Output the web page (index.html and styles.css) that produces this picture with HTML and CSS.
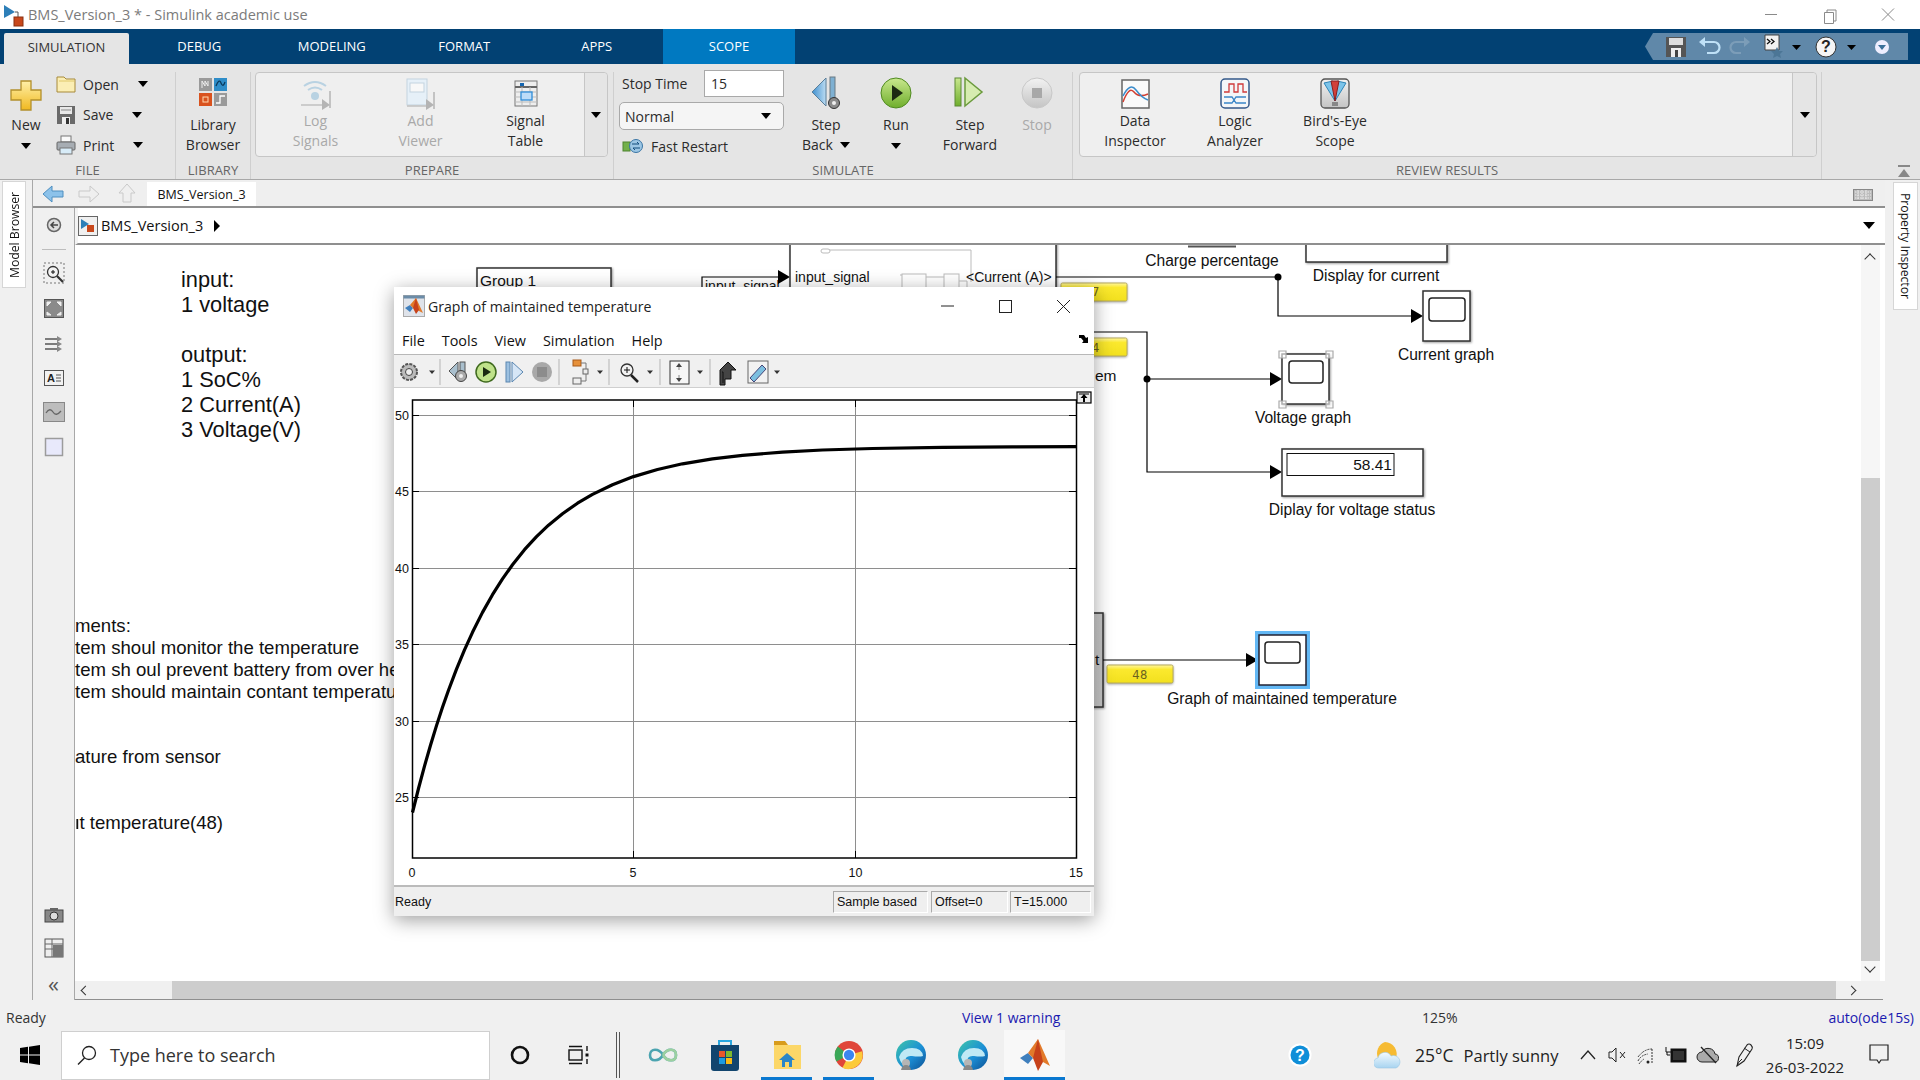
FILE: index.html
```html
<!DOCTYPE html>
<html lang="en">
<head>
<meta charset="utf-8">
<title>BMS_Version_3 - Simulink</title>
<link rel="stylesheet" href="styles.css">
</head>
<body>
<svg class="defs" width="0" height="0" aria-hidden="true"><defs>
  <linearGradient id="gPlus" x1="0" y1="0" x2="0" y2="1"><stop offset="0" stop-color="#fff0a8"/><stop offset="1" stop-color="#f0b820"/></linearGradient>
  <linearGradient id="gGreen" x1="0" y1="0" x2="0" y2="1"><stop offset="0" stop-color="#c9e88e"/><stop offset="1" stop-color="#6fae2c"/></linearGradient>
  <linearGradient id="gBlue" x1="0" y1="0" x2="1" y2="0"><stop offset="0" stop-color="#3e8fcf"/><stop offset="1" stop-color="#bcdcf2"/></linearGradient>
  <linearGradient id="gGrey" x1="0" y1="0" x2="0" y2="1"><stop offset="0" stop-color="#f2f2f2"/><stop offset="1" stop-color="#c4c4c4"/></linearGradient>
  <linearGradient id="gBlock" x1="0" y1="0" x2="1" y2="0"><stop offset="0" stop-color="#f0f0f0"/><stop offset="1" stop-color="#c4c4c4"/></linearGradient>
  <linearGradient id="gDisp" x1="0" y1="0" x2="0" y2="1"><stop offset="0" stop-color="#fff6a0"/><stop offset=".25" stop-color="#fbe92e"/><stop offset="1" stop-color="#f2e01e"/></linearGradient>
  <linearGradient id="gEdge" x1="0" y1="0" x2="1" y2="1"><stop offset="0" stop-color="#3fc6a8"/><stop offset=".55" stop-color="#1b8fd6"/><stop offset="1" stop-color="#0d4f92"/></linearGradient>
  <linearGradient id="gCloud" x1="0" y1="0" x2="0" y2="1"><stop offset="0" stop-color="#f4fbff"/><stop offset="1" stop-color="#a8d4f0"/></linearGradient>
</defs></svg>

<div class="app">
  <header class="titlebar">
    <svg class="title-icon" width="22" height="24" viewBox="0 0 22 24"><path d="M2 2l11 7-11 6z" fill="#2d7fb8"/><path d="M13 9h3v5" fill="none" stroke="#555" stroke-width="1"/><rect x="12" y="14" width="9" height="9" fill="#c8481c" stroke="#8a3010"/></svg>
    <span class="title-text">BMS_Version_3 * - Simulink academic use</span>
    <div class="win-controls">
      <svg class="win-ctl" width="58" height="29" viewBox="0 0 58 29"><path d="M23 14.5h12" stroke="#8a8a8a"/></svg>
      <svg class="win-ctl" width="58" height="29" viewBox="0 0 58 29"><path d="M24.5 12.5h9v11h-9zM27 12.5v-2.5h9v11h-2.500" fill="none" stroke="#8a8a8a"/></svg>
      <svg class="win-ctl" width="59" height="29" viewBox="0 0 59 29"><path d="M24 8.500l12 12M36 8.500l-12 12" stroke="#8a8a8a"/></svg>
    </div>
  </header>

  <nav class="tabs">
    <div class="tab tab-active">SIMULATION</div>
    <div class="tab">DEBUG</div>
    <div class="tab">MODELING</div>
    <div class="tab">FORMAT</div>
    <div class="tab">APPS</div>
    <div class="tab tab-scope">SCOPE</div>
    <div class="quick">
      <svg width="263" height="27" viewBox="0 0 263 27">
        <rect x="21" y="4" width="20" height="20" fill="#555"/><rect x="24" y="5" width="14" height="7" fill="#ddd"/><rect x="26" y="15" width="10" height="9" fill="#eee"/><rect x="30" y="17" width="3" height="7" fill="#444"/>
        <path d="M59 9h10a5 5 0 0 1 0 11h-7" fill="none" stroke="#bfe1f7" stroke-width="2.200"/><path d="M54 9l6-5v10z" fill="#bfe1f7"/>
        <path d="M101 9H91a5 5 0 0 0 0 11h5" fill="none" stroke="#7c9db8" stroke-width="2.200"/><path d="M105 9l-6-5v10z" fill="#7c9db8"/>
        <path d="M120 2h14v15h-14z" fill="#f2f2f2" stroke="#444"/><path d="M122 6l3 2.500-3 2.500M126 6l3 2.500-3 2.500" fill="none" stroke="#111" stroke-width="1.300"/><path d="M132 14l2 4h4l-3 3 1 4-4-2-4 2 1-4-3-3h4z" fill="#4c7696"/>
        <path d="M147 12h9l-4.500 5z" fill="#000"/>
        <circle cx="181" cy="14" r="10" fill="#f5f5f5" stroke="#333"/><text class="q-help" x="181" y="19">?</text>
        <path d="M202 12h9l-4.500 5z" fill="#000"/>
        <circle cx="237" cy="14" r="7" fill="#eef"/><path d="M233 12h8l-4 5z" fill="#3a6f9a"/>
      </svg>
    </div>
  </nav>

  <section class="ribbon">
    <div class="group g-file">
      <div class="group-body">
        <div class="btn btn-new">
          <svg width="36" height="36" viewBox="0 0 36 36"><path d="M13 4h10v9h10v10H23v10H13V23H3V13h10z" fill="url(#gPlus)" stroke="#b3902c" stroke-width="1.300"/></svg>
          <span class="btn-text">New</span>
          <span class="caret"></span>
        </div>
        <div class="file-list">
          <div class="file-row">
            <svg width="20" height="20" viewBox="0 0 20 20"><path d="M1 3h7l2 2h9v13H1z" fill="#fbeeb4" stroke="#a78a3a"/><path d="M3 7h15" stroke="#e0c868"/></svg>
            <span class="file-name">Open</span><span class="caret caret-open"></span>
          </div>
          <div class="file-row">
            <svg width="20" height="20" viewBox="0 0 20 20"><rect x="1" y="1" width="18" height="18" fill="#6a6a6a"/><rect x="4" y="2" width="12" height="7" fill="#e8e8e8"/><path d="M5 5h10" stroke="#888"/><rect x="6" y="12" width="8" height="7" fill="#eee"/><rect x="10" y="13" width="3" height="6" fill="#333"/></svg>
            <span class="file-name">Save</span><span class="caret caret-save"></span>
          </div>
          <div class="file-row">
            <svg width="20" height="20" viewBox="0 0 20 20"><rect x="5" y="1" width="10" height="6" fill="#fafafa" stroke="#777"/><rect x="1" y="7" width="18" height="8" rx="1" fill="#a7adb3" stroke="#666"/><rect x="4" y="13" width="12" height="6" fill="#d8ecf8" stroke="#777"/></svg>
            <span class="file-name">Print</span><span class="caret caret-print"></span>
          </div>
        </div>
      </div>
      <div class="group-label">FILE</div>
    </div>

    <div class="group g-lib">
      <div class="group-body">
        <div class="btn btn-lib">
          <svg width="30" height="30" viewBox="0 0 30 30"><rect x="1" y="1" width="13" height="13" fill="#9a9a9a"/><path d="M4 11V4l3 5V4l3 5V4" fill="none" stroke="#eee"/><rect x="16" y="1" width="13" height="13" fill="#2f8dc8"/><path d="M18 9q3-8 5-3t4-1" fill="none" stroke="#0b3a5c" stroke-width="1.300"/><rect x="1" y="16" width="13" height="13" fill="#d9521e"/><rect x="5" y="20" width="5" height="5" fill="none" stroke="#ffd9b0"/><rect x="16" y="16" width="13" height="13" fill="#9a9a9a"/><path d="M18 26h4v-7h5" fill="none" stroke="#fff" stroke-width="1.300"/></svg>
          <span class="btn-text">Library<br>Browser</span>
        </div>
      </div>
      <div class="group-label">LIBRARY</div>
    </div>

    <div class="group g-prep">
      <div class="group-body">
        <div class="panel panel-prep">
          <div class="panel-main panel-main-prep">
            <div class="pbtn pbtn-prep off">
              <svg width="32" height="32" viewBox="0 0 32 32"><path d="M4 8q11-8 22 0M8 12q7-5 14 0" fill="none" stroke="#b9d2e2" stroke-width="2"/><circle cx="15" cy="18" r="4" fill="#b9d2e2"/><path d="M1 27h22" stroke="#c0c0c0" stroke-width="1.500"/><path d="M22 21l8 6-8 5z" fill="#b4b4b4"/><path d="M30 13v17" stroke="#b4b4b4" stroke-width="1.500"/></svg>
              <span class="btn-text">Log<br>Signals</span>
            </div>
            <div class="pbtn pbtn-prep off">
              <svg width="32" height="32" viewBox="0 0 32 32"><rect x="2" y="1" width="20" height="26" fill="#e6f0f8" stroke="#c3d3df"/><rect x="5" y="5" width="14" height="9" fill="#f8f8f8" stroke="#c3d3df"/><path d="M2 28h20" stroke="#c0c0c0" stroke-width="1.500"/><path d="M21 21l8 6-8 5z" fill="#b4b4b4"/><path d="M29 14v17" stroke="#b4b4b4" stroke-width="1.500"/></svg>
              <span class="btn-text">Add<br>Viewer</span>
            </div>
            <div class="pbtn pbtn-prep">
              <svg width="32" height="32" viewBox="0 0 32 32"><rect x="5" y="3" width="22" height="25" fill="#eee" stroke="#777"/><path d="M5 9h22" stroke="#666" stroke-width="2"/><path d="M5 14h22M5 19h22M5 24h22M12 9v19M20 9v19" stroke="#bbb"/><rect x="10" y="5" width="4" height="3" fill="#1565b0"/><rect x="11" y="14" width="11" height="8" fill="#bcdcf8" stroke="#2f8dd8" stroke-width="1.300"/></svg>
              <span class="btn-text">Signal<br>Table</span>
            </div>
          </div>
          <div class="panel-more"><span class="caret"></span></div>
        </div>
      </div>
      <div class="group-label">PREPARE</div>
    </div>

    <div class="group g-sim">
      <div class="group-body">
        <div class="stop-col">
          <div class="stop-row"><span class="file-name">Stop Time</span><span class="stop-input">15</span></div>
          <div class="mode-select"><span>Normal</span><span class="caret"></span></div>
          <div class="fast-row">
            <svg width="22" height="18" viewBox="0 0 22 18"><rect x="1" y="5" width="7" height="9" fill="#72b04a" stroke="#4f8430"/><circle cx="14" cy="9" r="6.500" fill="#9cc6e4" stroke="#3a75a4"/><path d="M10 7h7l-2-2M18 11h-7l2 2" fill="none" stroke="#134d7d"/></svg>
            <span class="fast-name">Fast Restart</span>
          </div>
        </div>
        <div class="btn btn-back">
          <svg width="36" height="36" viewBox="0 0 36 36"><path d="M18 3L4 17l14 14z" fill="url(#gBlue)" stroke="#5a7f9a"/><rect x="22" y="2" width="5" height="26" fill="#7eb0d2" stroke="#6a7a84"/><circle cx="26" cy="28" r="5.500" fill="#8a8a8a" stroke="#333"/><circle cx="26" cy="28" r="2" fill="#eee"/></svg>
          <span class="btn-text">Step<br>Back<span class="caret caret-inline"></span></span>
        </div>
        <div class="btn btn-run">
          <svg width="36" height="36" viewBox="0 0 36 36"><circle cx="18" cy="18" r="15" fill="url(#gGreen)" stroke="#4f8a20"/><path d="M14 10l11 8-11 8z" fill="#1c2a12"/></svg>
          <span class="btn-text">Run</span>
          <span class="caret"></span>
        </div>
        <div class="btn btn-fwd">
          <svg width="36" height="36" viewBox="0 0 36 36"><rect x="3" y="3" width="6" height="28" fill="url(#gGreen)" stroke="#5c8a34"/><path d="M13 3l17 14-17 14z" fill="#d6ecb0" stroke="#6a9a3c" stroke-width="1.500"/></svg>
          <span class="btn-text">Step<br>Forward</span>
        </div>
        <div class="btn btn-stop off">
          <svg width="36" height="36" viewBox="0 0 36 36"><circle cx="18" cy="18" r="15" fill="url(#gGrey)" stroke="#c8c8c8"/><rect x="13" y="13" width="10" height="10" fill="#a8a8a8"/></svg>
          <span class="btn-text">Stop</span>
        </div>
      </div>
      <div class="group-label">SIMULATE</div>
    </div>

    <div class="group g-rev">
      <div class="group-body">
        <div class="panel panel-rev">
          <div class="panel-main panel-main-rev">
            <div class="pbtn pbtn-rev">
              <svg width="32" height="32" viewBox="0 0 32 32"><rect x="3" y="2" width="27" height="28" fill="#fafafa" stroke="#666" stroke-width="1.500"/><path d="M4 24q6-16 11-10t14 2" fill="none" stroke="#d23f31" stroke-width="1.500"/><path d="M4 18q7-14 13-6t12 10" fill="none" stroke="#3a8ccb" stroke-width="1.500"/></svg>
              <span class="btn-text">Data<br>Inspector</span>
            </div>
            <div class="pbtn pbtn-rev">
              <svg width="32" height="32" viewBox="0 0 32 32"><rect x="2" y="1" width="28" height="29" rx="4" fill="#f4f6f8" stroke="#34598a" stroke-width="1.500"/><path d="M5 14h5V6h5v8h4V6h5v8h4" fill="none" stroke="#cf3a3a" stroke-width="1.300"/><path d="M5 19h8l4 6h10M5 25h8l4-6h10" fill="none" stroke="#3a86c8" stroke-width="1.300"/></svg>
              <span class="btn-text">Logic<br>Analyzer</span>
            </div>
            <div class="pbtn pbtn-rev">
              <svg width="32" height="32" viewBox="0 0 32 32"><rect x="2" y="1" width="28" height="29" rx="4" fill="url(#gGrey)" stroke="#555" stroke-width="1.300"/><path d="M5 5l9-2 2 20zM27 5l-9-2-2 20z" fill="#7cc4ea" stroke="#2f86b8"/><path d="M12 3h8l-4 20z" fill="#d2403a" stroke="#8a2020"/><rect x="13" y="24" width="6" height="4" fill="#888"/></svg>
              <span class="btn-text">Bird's-Eye<br>Scope</span>
            </div>
          </div>
          <div class="panel-more panel-more-rev"><span class="caret"></span></div>
        </div>
      </div>
      <div class="group-label">REVIEW RESULTS</div>
    </div>
    <div class="ribbon-end">
      <svg width="16" height="14" viewBox="0 0 16 14"><path d="M2 1h12" stroke="#888" stroke-width="2"/><path d="M8 4l6 8H2z" fill="#888"/></svg>
    </div>
  </section>

  <div class="workspace">
    <aside class="rail rail-left"><div class="vtab vtab-left">Model Browser</div></aside>
    <main class="center">
      <div class="navbar">
        <svg class="nav-ico" width="22" height="18" viewBox="0 0 22 18"><path d="M10 1L1 9l9 8v-5h11V6H10z" fill="#8cc2ea" stroke="#4e8fc0"/></svg>
        <svg class="nav-ico nav-fwd" width="22" height="18" viewBox="0 0 22 18"><path d="M12 1l9 8-9 8v-5H1V6h11z" fill="#efefef" stroke="#c9c9c9"/></svg>
        <svg class="nav-ico nav-up" width="18" height="20" viewBox="0 0 18 20"><path d="M9 1l8 9h-4v9H5v-9H1z" fill="#efefef" stroke="#c9c9c9"/></svg>
        <div class="doc-tab">BMS_Version_3</div>
        <svg class="keyboard" width="20" height="12" viewBox="0 0 20 12"><rect x=".5" y=".5" width="19" height="11" fill="#bbb" stroke="#888"/><path d="M2 3h16M2 6h16M2 9h16M5 1v10M9 1v10M13 1v10" stroke="#eee" stroke-dasharray="1.500 1"/></svg>
      </div>
      <div class="editor-row">
        <div class="side-tools">
          <svg class="st st-first" width="20" height="20" viewBox="0 0 20 20"><circle cx="10" cy="10" r="6.500" fill="#ddd" stroke="#666" stroke-width="1.500"/><path d="M14 10H7m3-3l-3 3 3 3" fill="none" stroke="#444" stroke-width="1.500"/></svg>
          <div class="st-sep"></div>
          <svg class="st" width="22" height="22" viewBox="0 0 22 22"><rect x="1" y="1" width="20" height="20" fill="none" stroke="#777" stroke-dasharray="2 2"/><circle cx="10" cy="10" r="5.500" fill="#f4f4f4" stroke="#333" stroke-width="1.300"/><path d="M8 10h4M10 8v4" stroke="#111"/><path d="M14 14l6 6" stroke="#333" stroke-width="2.200"/></svg>
          <svg class="st" width="20" height="20" viewBox="0 0 20 20"><rect x=".5" y=".5" width="19" height="18" fill="#8a8a8a" stroke="#555"/><path d="M3 7V3h4L3 7M17 7V3h-4l4 4M3 13v3h4l-4-3M17 13v3h-4l4-3" fill="#eee" stroke="#eee"/></svg>
          <svg class="st" width="20" height="20" viewBox="0 0 20 20"><path d="M1 5h15M1 10h15M1 15h15" stroke="#555" stroke-width="1.300"/><path d="M13 2l5 3-5 3zM13 7l5 3-5 3zM13 12l5 3-5 3z" fill="#888"/></svg>
          <svg class="st" width="20" height="18" viewBox="0 0 20 18"><rect x=".5" y="1.500" width="19" height="15" fill="#f2f2f2" stroke="#555"/><text class="st-a" x="3" y="13">A</text><path d="M12 6h5M12 9h5M12 12h5" stroke="#555"/></svg>
          <svg class="st" width="22" height="20" viewBox="0 0 22 20"><rect x=".5" y=".5" width="21" height="19" fill="#bdbdbd" stroke="#888"/><path d="M3 11q4-6 7-1t8-1" fill="none" stroke="#666" stroke-width="1.300"/></svg>
          <svg class="st" width="20" height="20" viewBox="0 0 20 20"><rect x="1.500" y="1.500" width="17" height="17" fill="#e8e9fb" stroke="#9c9c9c" stroke-width="1.500"/></svg>
          <div class="st-spacer"></div>
          <svg class="st-low" width="20" height="16" viewBox="0 0 20 16"><rect x="1" y="3" width="18" height="12" fill="#888" stroke="#444"/><rect x="6" y="1" width="8" height="3" fill="#666"/><circle cx="10" cy="9" r="4" fill="#ddd" stroke="#333"/></svg>
          <svg class="st-low" width="20" height="20" viewBox="0 0 20 20"><rect x="1" y="1" width="18" height="18" fill="#eee" stroke="#555"/><path d="M1 6h18M1 11h18M8 1v18" stroke="#666"/><rect x="9" y="7" width="10" height="12" fill="#777"/></svg>
          <span class="st-collapse">«</span>
        </div>
        <div class="editor">
          <div class="breadcrumb">
            <svg width="20" height="20" viewBox="0 0 20 20"><rect x=".5" y=".5" width="19" height="19" fill="#f0f0f0" stroke="#666"/><path d="M3 3l8 5-8 5z" fill="#2d7fb8"/><rect x="9" y="9" width="7" height="7" fill="#c8481c"/></svg>
            <span class="crumb-text">BMS_Version_3</span>
            <span class="crumb-arrow"></span>
            <span class="caret caret-crumb"></span>
          </div>
          <div class="canvas">
            <svg class="diagram" width="1786" height="737" viewBox="75 245 1786 737">
              <text class="note-lg" x="181" y="287">input:</text>
              <text class="note-lg" x="181" y="312">1 voltage</text>
              <text class="note-lg" x="181" y="362">output:</text>
              <text class="note-lg" x="181" y="387">1 SoC%</text>
              <text class="note-lg" x="181" y="412">2 Current(A)</text>
              <text class="note-lg" x="181" y="437">3 Voltage(V)</text>
              <text class="note" x="75" y="632">ments:</text>
              <text class="note" x="75" y="654">tem shoul monitor the temperature</text>
              <text class="note" x="75" y="676">tem sh oul prevent battery from over he</text>
              <text class="note" x="75" y="698">tem should maintain contant temperatu</text>
              <text class="note" x="75" y="763">ature from sensor</text>
              <rect class="note-stem" x="76.400" y="819" width="1.800" height="10"/>
              <text class="note" x="79.400" y="829">t temperature(48)</text>

              <rect class="block" x="477" y="268" width="134" height="40"/>
              <text class="dlabel-s" x="480" y="286">Group 1</text>
              <path class="wire" d="M702 310V277H780"/>
              <text class="dlabel-xs" x="705" y="291">input_signal</text>
              <path class="arrow" d="M778 270l12 7-12 7z"/>

              <rect class="block" x="790" y="240" width="266" height="70"/>
              <path class="inner" d="M826 250h145v32M900 275h24v30M945 281h22v30M924 277h21"/>
              <rect class="inner-fill" x="821" y="249" width="9" height="4" rx="2"/>
              <rect class="inner-fill" x="902" y="274" width="24" height="30"/>
              <rect class="inner-fill" x="944" y="274" width="15" height="30"/>
              <text class="dlabel-xs" x="795" y="282">input_signal</text>
              <text class="dlabel-xs" x="966" y="282">&lt;Current (A)&gt;</text>

              <path class="wire" d="M1056 277H1278V316H1412"/>
              <circle class="dot" cx="1278" cy="277" r="3.500"/>
              <path class="arrow" d="M1411 309l12 7-12 7z"/>
              <rect class="display-yl" x="1061" y="283" width="66" height="18" rx="1.500"/>
              <text class="yl-text" x="1082" y="296">0.007</text>

              <path class="shadow-line" d="M1188 245.500h48v2h-48z"/>
              <text class="dlabel" x="1212" y="266">Charge percentage</text>
              <rect class="block" x="1306" y="230" width="141" height="32"/>
              <text class="dlabel" x="1376" y="281">Display for current</text>

              <rect class="block" x="1423" y="291" width="47" height="50"/>
              <rect class="screen" x="1429" y="298" width="36" height="23" rx="3"/>
              <text class="dlabel" x="1446" y="360">Current graph</text>

              <rect class="display-yl" x="1061" y="338" width="66" height="18" rx="1.500"/>
              <text class="yl-text" x="1086" y="352">58.4</text>
              <path class="wire" d="M1094 332H1147V472H1271M1147 379H1271"/>
              <circle class="dot" cx="1147" cy="379" r="3.500"/>
              <text class="dlabel-s" x="1095" y="381">em</text>
              <path class="arrow" d="M1270 372l12 7-12 7z"/>
              <path class="arrow" d="M1270 465l12 7-12 7z"/>

              <rect class="block" x="1282" y="354" width="47" height="50"/>
              <rect class="screen" x="1289" y="361" width="34" height="22" rx="3"/>
              <path class="handle" d="M1279 351h7v7h-7zM1326 351h7v7h-7zM1279 401h7v7h-7zM1326 401h7v7h-7z"/>
              <text class="dlabel" x="1303" y="423">Voltage graph</text>

              <rect class="block" x="1282" y="449" width="141" height="47"/>
              <rect class="disp-box" x="1287" y="453.500" width="107" height="22"/>
              <text class="disp-val" x="1392" y="470">58.41</text>
              <text class="dlabel" x="1352" y="515">Diplay for voltage status</text>

              <rect class="block-grey" x="1060" y="613" width="43" height="94"/>
              <text class="dlabel-s" x="1095" y="665">t</text>
              <path class="wire" d="M1103 660H1247"/>
              <path class="arrow" d="M1246 653l12 7-12 7z"/>
              <rect class="display-yl" x="1107" y="665" width="66" height="18" rx="1.500"/>
              <text class="yl-text" x="1140" y="679">48</text>

              <rect class="selected" x="1255" y="631" width="55" height="58"/>
              <rect class="block-plain" x="1259" y="635" width="47" height="50"/>
              <rect class="screen" x="1265" y="642" width="35" height="21" rx="3"/>
              <text class="dlabel" x="1282" y="704">Graph of maintained temperature</text>
            </svg>
            <div class="vscroll">
              <span class="vs-arrow vs-up"></span>
              <div class="vs-thumb"></div>
              <span class="vs-arrow vs-down"></span>
            </div>
          </div>
          <div class="hscroll">
            <span class="hs-arrow hs-left"></span>
            <div class="hs-thumb"></div>
            <span class="hs-arrow hs-right"></span>
          </div>
        </div>
      </div>
    </main>
    <aside class="rail rail-right"><div class="vtab vtab-right">Property Inspector</div></aside>
  </div>

  <footer class="statusbar">
    <span class="st-ready">Ready</span>
    <span class="st-warn">View 1 warning</span>
    <span class="st-zoom">125%</span>
    <span class="st-solver">auto(ode15s)</span>
  </footer>

  <div class="taskbar">
    <div class="start"><svg width="20" height="20" viewBox="0 0 20 20"><path d="M0 3l8-1.200V9.500H0zM9 1.700L20 0v9.500H9zM0 10.500h8v7.700l-8-1.200zM9 10.500h11V20L9 18.300z" fill="#000"/></svg></div>
    <div class="search">
      <svg width="22" height="22" viewBox="0 0 22 22"><circle cx="13" cy="9" r="6.500" fill="none" stroke="#222" stroke-width="1.300"/><path d="M8.500 14L2 20.500" stroke="#222" stroke-width="1.500"/></svg>
      <span class="search-text">Type here to search</span>
    </div>
    <div class="tb-sys tb-ring"><svg width="20" height="20" viewBox="0 0 20 20"><circle cx="10" cy="10" r="8" fill="none" stroke="#111" stroke-width="2.600"/></svg></div>
    <div class="tb-sys tb-view"><svg width="22" height="20" viewBox="0 0 22 20"><rect x="1" y="5" width="13" height="10" fill="none" stroke="#111" stroke-width="1.400"/><path d="M1 1.500h13M1 18.500h13M19 1v5M19 14v5" stroke="#111" stroke-width="1.400"/><rect x="17.500" y="8.500" width="3" height="3" fill="#111"/></svg></div>
    <div class="tb-sep"></div>
    <div class="tb-apps">
      <div class="app-cell"><svg width="32" height="24" viewBox="0 0 32 24"><path d="M16 12C12 5 3 5 3 12s9 7 13 0 13-7 13 0-9 7-13 0z" fill="none" stroke="#4ba4b0" stroke-width="2.600"/><path d="M16 12c4-7 13-7 13 0s-9 7-13 0" fill="none" stroke="#9cd0a0" stroke-width="2.600"/></svg></div>
      <div class="app-cell"><svg width="30" height="34" viewBox="0 0 30 34"><path d="M9 8V3h12v5" fill="none" stroke="#2aa7e0" stroke-width="2"/><path d="M1 7h28v23a3 3 0 0 1-3 3H4a3 3 0 0 1-3-3z" fill="#12456e"/><rect x="9" y="13" width="6" height="6" fill="#e8562a"/><rect x="16" y="13" width="6" height="6" fill="#7eb92e"/><rect x="9" y="20" width="6" height="6" fill="#1c9be0"/><rect x="16" y="20" width="6" height="6" fill="#f9ba14"/></svg></div>
      <div class="app-cell app-on"><svg width="30" height="32" viewBox="0 0 30 32"><path d="M2 2h11l3 4H2z" fill="#d89c1c"/><rect x="2" y="6" width="27" height="24" fill="#fcd768"/><path d="M15 14l8 7h-3v7h-10v-7H7z" fill="#2a86c8"/><rect x="13" y="23" width="4" height="5" fill="#fcd768"/></svg></div>
      <div class="app-cell app-on"><svg width="30" height="32" viewBox="0 0 32 32"><circle cx="16" cy="16" r="15" fill="#e0463a"/><path d="M16 16L2.500 23A15 15 0 0 1 4 7z" fill="#3aa757"/><path d="M16 16L30 12A15 15 0 0 1 9 29.500z" fill="#fcca3a"/><circle cx="16" cy="16" r="7" fill="#fff"/><circle cx="16" cy="16" r="5.500" fill="#3b86f0"/></svg></div>
      <div class="app-cell"><svg width="32" height="32" viewBox="0 0 32 32"><circle cx="16" cy="16" r="15" fill="url(#gEdge)"/><path d="M4 18q3-9 13-9t11 8q-4 1-11 0t-7 6q0 4 4 6-8-2-10-11z" fill="#bfe9f5"/><circle cx="11" cy="24" r="4" fill="#b5b5b5"/><path d="M6 31q1-5 5-5t5 5z" fill="#888"/></svg></div>
      <div class="app-cell"><svg width="32" height="32" viewBox="0 0 32 32"><circle cx="16" cy="16" r="15" fill="url(#gEdge)"/><path d="M4 18q3-9 13-9t11 8q-4 1-11 0t-7 6q0 4 4 6-8-2-10-11z" fill="#bfe9f5"/><circle cx="11" cy="24" r="4" fill="#b5b5b5"/><path d="M6 31q1-5 5-5t5 5z" fill="#888"/></svg></div>
      <div class="app-cell app-on app-matlab"><svg width="32" height="34" viewBox="0 0 32 34"><path d="M1 20l8-5 5 5-5 6z" fill="#3f7fbd"/><path d="M9 15l10-14 12 27-7-4-5-5-5 1z" fill="#e27a2a"/><path d="M19 1l-5 19 5 13 5-9z" fill="#c7421a"/></svg></div>
    </div>
    <div class="tray-help"><svg width="24" height="24" viewBox="0 0 24 24"><circle cx="12" cy="12" r="11.500" fill="#fff"/><circle cx="12" cy="12" r="9.500" fill="#0f8ed8"/><text class="help-q" x="12" y="17.500">?</text></svg></div>
    <div class="weather">
      <svg width="28" height="28" viewBox="0 0 28 28"><path d="M11 1a12 12 0 0 0-7 16h18A12 12 0 0 0 11 1z" fill="#f6bb33"/><path d="M5 27a5 5 0 0 1-1-10 7 7 0 0 1 13-2 6 6 0 0 1 5 12z" fill="url(#gCloud)" stroke="#9cc8e4" stroke-width=".6"/></svg>
      <span class="temp">25°C</span><span class="sky">Partly sunny</span>
    </div>
    <div class="tray">
      <svg class="tray-ico tray-chev" width="18" height="12" viewBox="0 0 18 12"><path d="M2 10l7-8 7 8" fill="none" stroke="#222" stroke-width="1.300"/></svg>
      <svg class="tray-ico" width="22" height="20" viewBox="0 0 22 20"><path d="M2 7h3l4-4v14l-4-4H2z" fill="none" stroke="#222"/><path d="M13 7l5 6M18 7l-5 6" stroke="#222"/></svg>
      <svg class="tray-ico" width="22" height="20" viewBox="0 0 22 20"><path d="M2 12q6-8 14-8M2 16q3-6 10-7M3 19q2-3 5-5" fill="none" stroke="#333" stroke-dasharray="2 1"/><circle cx="12" cy="17" r="1.500" fill="#222"/><path d="M16 4v14" stroke="#333" stroke-dasharray="2 1"/></svg>
      <svg class="tray-ico" width="24" height="20" viewBox="0 0 24 20"><rect x="6" y="4" width="15" height="13" fill="#111" stroke="#111"/><rect x="8" y="6" width="11" height="9" fill="#333"/><path d="M1 2v5h5M2 7v3h3" fill="none" stroke="#111"/></svg>
      <svg class="tray-ico" width="24" height="20" viewBox="0 0 24 20"><path d="M6 17a5 5 0 0 1 0-10 7 7 0 0 1 13 2 4 4 0 0 1-1 8z" fill="#aaa" stroke="#222"/><path d="M5 2l15 16" stroke="#222" stroke-width="1.300"/></svg>
      <svg class="tray-ico tray-pen" width="22" height="26" viewBox="0 0 22 26"><path d="M3 24l2-9 8-12q2-2 4 0t1 4L10 19z" fill="none" stroke="#222" stroke-width="1.100"/><path d="M10 6l6 4M8 17q-4 3-5 7" fill="none" stroke="#222"/></svg>
    </div>
    <div class="clock"><span>15:09</span><span>26-03-2022</span></div>
    <div class="notify"><svg width="22" height="24" viewBox="0 0 22 24"><path d="M2 2h18v15h-7l-2 3-2-3H2z" fill="none" stroke="#222" stroke-width="1.200"/></svg></div>
  </div>

  <section class="scope">
    <div class="scope-title">
      <svg width="22" height="22" viewBox="0 0 22 22"><rect x=".5" y=".5" width="21" height="21" fill="#dfe3ea" stroke="#aaa"/><rect x=".5" y=".5" width="21" height="3" fill="#6b8ca8"/><path d="M2 13l5-3 3 3-3 4z" fill="#3f7fbd"/><path d="M7 10l6-7 7 15-4-2-3-3-3 0z" fill="#e27a2a"/><path d="M13 3l-3 10 3 6 3-4z" fill="#c7421a"/></svg>
      <span class="scope-name">Graph of maintained temperature</span>
      <div class="scope-ctl">
        <svg width="58" height="38" viewBox="0 0 58 38"><path d="M23 19h13" stroke="#222"/></svg>
        <svg width="58" height="38" viewBox="0 0 58 38"><rect x="23.500" y="13.500" width="12" height="12" fill="none" stroke="#222"/></svg>
        <svg width="58" height="38" viewBox="0 0 58 38"><path d="M23 13l13 13M36 13L23 26" stroke="#222"/></svg>
      </div>
    </div>
    <div class="scope-menu">
      <span class="mi">File</span><span class="mi">Tools</span><span class="mi">View</span><span class="mi">Simulation</span><span class="mi">Help</span>
      <svg class="menu-dock" width="12" height="11" viewBox="0 0 12 11"><path d="M1 1h5l2 3 2-1v6H4l1.500-2L3 4H1z" fill="#000"/></svg>
    </div>
    <div class="scope-tools">
      <svg width="700" height="33" viewBox="394 355 700 33">
        <g class="sc-sep"><path d="M440 359v26M559 359v26M609 359v26M660 359v26M710 359v26"/></g>
        <circle cx="409" cy="372" r="8" fill="#bbb" stroke="#555" stroke-width="2" stroke-dasharray="3 1.200"/><circle cx="409" cy="372" r="3.500" fill="#eee" stroke="#444"/>
        <path d="M429 370.500h6l-3 3.500zM597 370.500h6l-3 3.500zM647 370.500h6l-3 3.500zM697 370.500h6l-3 3.500zM774 370.500h6l-3 3.500z" fill="#333"/>
        <path d="M458 362l-9 9 9 9z" fill="#a9bfcd" stroke="#555"/><rect x="460" y="362" width="5" height="10" fill="#a9bfcd" stroke="#555"/><circle cx="461" cy="376" r="5.500" fill="#aaa" stroke="#444"/><circle cx="461" cy="376" r="2" fill="#eee"/>
        <circle cx="486" cy="372" r="10" fill="#bfe28a" stroke="#3f6a1e" stroke-width="1.500"/><path d="M483 367l8 5-8 5z" fill="#1a2a10"/>
        <rect x="506" y="362" width="4" height="20" fill="#9cc0e0" stroke="#5a86b0"/><path d="M512 362l11 10-11 10z" fill="#d6e6f6" stroke="#5a86b0"/>
        <circle cx="542" cy="372" r="10" fill="#a8a8a8"/><rect x="537" y="367" width="10" height="10" fill="#8c8c8c"/>
        <rect x="573" y="360" width="8" height="6" fill="#e6903a" stroke="#a85a18"/><rect x="573" y="378" width="8" height="6" fill="#eee" stroke="#666"/><rect x="583" y="369" width="5" height="5" fill="#eee" stroke="#666"/><path d="M581 363h5v6M581 381h5v-7" fill="none" stroke="#777"/>
        <circle cx="627" cy="370" r="6" fill="#f2f2f2" stroke="#333" stroke-width="1.300"/><path d="M624 370h6M627 367v6" stroke="#111"/><path d="M631 375l7 7" stroke="#222" stroke-width="2.500"/>
        <rect x="670" y="361" width="19" height="23" fill="#f6f6f6" stroke="#333"/><path d="M679 363l-3 4h6zM679 382l-3-4h6z" fill="#444"/><path d="M679 367v3M679 375v3" stroke="#888"/>
        <path d="M720 370l8-8 8 8h-5v9h-6v6h-5zM722 372h1v11" fill="#444" stroke="#111"/>
        <rect x="748" y="361" width="20" height="22" fill="#f2f2f2" stroke="#666"/><path d="M750 378l12-13 4 4-12 13z" fill="#7cbfe0" stroke="#447"/>
      </svg>
    </div>
    <div class="scope-plot">
      <svg width="700" height="497" viewBox="394 388 700 497">
        <path class="grid" d="M633.500 400V858M855.500 400V858M412.500 415.500H1076M412.500 491.500H1076M412.500 568.500H1076M412.500 644.500H1076M412.500 721.500H1076M412.500 797.500H1076"/>
        <path class="tick" d="M412 415.500h7M412 491.500h7M412 568.500h7M412 644.500h7M412 721.500h7M412 797.500h7M1076 415.500h-7M1076 491.500h-7M1076 568.500h-7M1076 644.500h-7M1076 721.500h-7M1076 797.500h-7M633.500 400v7M855.500 400v7M633.500 858v-7M855.500 858v-7"/>
        <rect class="axes" x="412.500" y="400" width="664" height="458"/>
        <polyline class="curve" transform="translate(412.500 400)" points="0,412.500 6,388.500 12,366.100 18,345.200 24,325.600 30,307.300 36,290.200 44,269.100 52,249.900 60,232.300 70,212.400 80,194.700 90,178.900 100,164.800 112,149.700 124,136.700 136,125.200 150,113.700 165,103.200 180,94.400 200,84.700 221,76.600 245,69.500 270,63.800 300,58.800 330,55.300 370,52.100 410,50 460,48.500 530,47.400 600,46.900 664,46.700"/>
        <text class="ytick" x="409" y="420">50</text><text class="ytick" x="409" y="496">45</text><text class="ytick" x="409" y="573">40</text><text class="ytick" x="409" y="649">35</text><text class="ytick" x="409" y="726">30</text><text class="ytick" x="409" y="802">25</text>
        <text class="xtick" x="412" y="877">0</text><text class="xtick" x="633" y="877">5</text><text class="xtick" x="855.500" y="877">10</text><text class="xtick" x="1076" y="877">15</text>
        <rect class="restore-box" x="1077" y="392" width="14" height="11"/><path d="M1084 394l-3.500 4h2.500v4h2v-4h2.500z" fill="#000"/><path d="M1079 394h10" stroke="#000"/>
      </svg>
    </div>
    <div class="scope-status">
      <span class="ss-ready">Ready</span>
      <span class="ss-cell ss-sample">Sample based</span>
      <span class="ss-cell ss-offset">Offset=0</span>
      <span class="ss-cell ss-time">T=15.000</span>
    </div>
  </section>
</div>
</body>
</html>
```

FILE: styles.css
```css
* { box-sizing: border-box; }
html, body { margin: 0; padding: 0; background: #fff; }
body { font-family: "Open Sans", "Noto Sans", sans-serif; color: #2b2b2b; }
.defs { position: absolute; }
svg { display: block; flex: none; }

.app { position: relative; width: 1920px; height: 1080px; display: flex; flex-direction: column; overflow: hidden; background: #f0f0f0; }

/* title bar */
.titlebar { height: 29px; flex: none; display: flex; align-items: center; background: #fff; padding-left: 2px; }
.title-text { margin-left: 4px; font-size: 14.500px; color: #7b7b7b; white-space: nowrap; }
.win-controls { margin-left: auto; display: flex; padding-right: 3px; }

/* tabs */
.tabs { height: 35px; flex: none; display: flex; align-items: flex-end; background: #024173; padding-left: 4px; color: #fff; font-size: 13px; }
.tab { width: 132.500px; height: 35px; padding-bottom: 1px; display: flex; align-items: center; justify-content: center; }
.tab-active { width: 125px; height: 31px; padding-bottom: 4px; margin-right: 4px; background: #e5e5e5; color: #333; border-radius: 2px 2px 0 0; }
.tab-scope { width: 132px; background: #0079c1; }
.quick { margin-left: auto; margin-right: 12px; margin-bottom: 4px; height: 27px; background: #6088a9; clip-path: polygon(8px 0, 100% 0, 100% 100%, 8px 100%, 0 50%); }

/* ribbon */
.ribbon { height: 116px; flex: none; display: flex; background: #e5e5e5; border-bottom: 1px solid #a8a8a8; font-size: 14px; }
.group { display: flex; flex-direction: column; border-right: 1px solid #cfcfcf; margin-top: 8px; }
.group-body { height: 88px; flex: none; display: flex; }
.group-label { height: 19px; line-height: 20px; text-align: center; font-size: 13px; color: #666; }
.g-file { width: 176px; }
.g-lib { width: 75px; }
.g-prep { width: 363px; }
.g-sim { width: 459px; }
.g-rev { width: 749px; }
.ribbon-end { flex: 1; display: flex; justify-content: flex-end; align-items: flex-end; padding: 0 8px 0 0; }

.btn { display: flex; flex-direction: column; align-items: center; }
.btn-text { line-height: 20px; text-align: center; white-space: nowrap; }
.btn-new { width: 52px; padding-top: 5px; }
.btn-new .btn-text { margin-top: 2px; }
.btn-new .caret { margin-top: 8px; }
.caret { display: inline-block; width: 0; height: 0; border-left: 5px solid transparent; border-right: 5px solid transparent; border-top: 6px solid #000; flex: none; }
.file-list { display: flex; flex-direction: column; margin-top: -3px; padding-left: 4px; }
.file-row { height: 30.500px; flex: none; display: flex; align-items: center; }
.file-name { margin-left: 7px; white-space: nowrap; }
.caret-open { margin-left: 19px; }
.caret-save { margin-left: 19px; }
.caret-print { margin-left: 19px; }
.btn-lib { width: 75px; padding-top: 5px; }
.btn-lib .btn-text { margin-top: 8px; }

.panel { display: flex; border: 1px solid #c6c6c6; border-radius: 4px; background: #efefef; height: 85px; }
.panel-prep { margin-left: 4px; width: 353px; }
.panel-rev { margin-left: 6px; width: 738px; }
.panel-main { display: flex; }
.panel-main-prep { width: 328px; padding-left: 7px; }
.panel-main-rev { width: 712px; padding-left: 5px; }
.panel-more { flex: 1; display: flex; align-items: center; justify-content: center; background: #e5e5e5; border-left: 1px solid #c6c6c6; border-radius: 0 4px 4px 0; }
.pbtn { display: flex; flex-direction: column; align-items: center; padding-top: 5px; }
.pbtn-prep { width: 105px; }
.pbtn-rev { width: 100px; }
.pbtn .btn-text { margin-top: 1px; }
.off { color: #a9a9a9; }

.stop-col { width: 172px; margin-left: 5px; margin-top: -3px; padding-right: 7px; display: flex; flex-direction: column; }
.stop-row { height: 29px; flex: none; display: flex; align-items: center; }
.stop-row .file-name { margin-left: 3px; }
.stop-input { margin-left: auto; width: 80px; height: 27px; background: #fff; border: 1px solid #a9a9a9; padding-left: 6px; line-height: 25px; margin-top: -1px; }
.mode-select { margin-top: 4px; height: 28px; flex: none; display: flex; align-items: center; justify-content: space-between; background: #f5f5f5; border: 1px solid #a9a9a9; border-radius: 5px; padding: 0 12px 0 5px; }
.fast-row { display: flex; align-items: center; margin-top: 6px; height: 20px; flex: none; padding-left: 3px; }
.fast-name { margin-left: 7px; }
.btn-back { width: 70px; padding-top: 3px; }
.btn-run { width: 70px; padding-top: 3px; }
.btn-fwd { width: 78px; padding-top: 3px; }
.btn-stop { width: 56px; padding-top: 3px; }
.btn-back .btn-text, .btn-run .btn-text, .btn-fwd .btn-text, .btn-stop .btn-text { margin-top: 4px; }
.btn-run .caret { margin-top: 8px; }
.caret-inline { margin-left: 7px; vertical-align: 2px; }

/* workspace */
.workspace { flex: 1; min-height: 0; display: flex; }
.rail { flex: none; display: flex; padding-top: 1px; background: #f0f0f0; }
.rail-left { width: 33px; border-right: 1px solid #a8a8a8; padding-left: 2px; }
.rail-right { width: 35px; justify-content: flex-end; padding-right: 2px; padding-top: 2px; }
.vtab { writing-mode: vertical-rl; background: #fff; border: 1px solid #d6d6d6; font-size: 12.200px; color: #111; display: flex; align-items: center; justify-content: center; white-space: nowrap; }
.vtab-left { width: 24px; height: 107px; transform: rotate(180deg); }
.vtab-right { width: 25px; height: 128px; }
.center { flex: 1; min-width: 0; display: flex; flex-direction: column; }
.navbar { height: 28px; flex: none; display: flex; align-items: flex-end; border-bottom: 2px solid #8f8f8f; background: #efefef; padding-left: 9px; }
.nav-ico { margin-bottom: 3px; margin-left: 0; }
.nav-fwd { margin-left: 14px; }
.nav-up { margin-left: 18px; }
.doc-tab { width: 109px; height: 24px; padding-top: 1px; margin-left: 11px; background: #fff; font-size: 12.500px; display: flex; align-items: center; justify-content: center; color: #111; }
.keyboard { margin-left: auto; margin-right: 12px; margin-bottom: 5px; }
.editor-row { flex: 1; min-height: 0; display: flex; }
.side-tools { width: 42px; flex: none; display: flex; flex-direction: column; align-items: center; border-right: 1px solid #a8a8a8; padding: 7px 0 7px 0; }
.st { margin-bottom: 15px; }
.st-first { margin-bottom: 14px; }
.st-sep { width: 24px; height: 1px; background: #bdbdbd; margin-bottom: 12px; }
.st-spacer { flex: 1; }
.st-low { margin-bottom: 15px; }
.st-collapse { font-size: 22px; line-height: 20px; color: #555; }
.st-a { font: bold 11px "Liberation Sans", sans-serif; fill: #222; }
.editor { flex: 1; min-width: 0; display: flex; flex-direction: column; }
.breadcrumb { height: 37px; flex: none; display: flex; align-items: center; background: #fff; border-bottom: 2px solid #8f8f8f; border-left: 3px solid #f3f3f3; font-size: 14.500px; color: #111; }
.crumb-text { margin-left: 3px; }
.crumb-arrow { margin-left: 11px; width: 0; height: 0; border-top: 6px solid transparent; border-bottom: 6px solid transparent; border-left: 6px solid #000; }
.caret-crumb { margin-left: auto; margin-right: 10px; border-left-width: 6px; border-right-width: 6px; border-top-width: 7px; }
.canvas { flex: 1; min-height: 0; display: flex; background: #fff; position: relative; overflow: hidden; }
.diagram { flex: none; }

.note-lg { font: 21.800px "Liberation Sans", Arial, sans-serif; fill: #111; }
.note { font: 18.600px "Liberation Sans", Arial, sans-serif; fill: #111; }
.note-stem { fill: #111; }
.dlabel { font: 15.600px "Liberation Sans", Arial, sans-serif; fill: #111; text-anchor: middle; }
.dlabel-s { font: 15.500px "Liberation Sans", Arial, sans-serif; fill: #111; }
.dlabel-xs { font: 14px "Liberation Sans", Arial, sans-serif; fill: #111; }
.block { fill: #fff; stroke: #333; stroke-width: 1.500px; filter: drop-shadow(1px 1px 1px #999); }
.block-plain { fill: #fff; stroke: #223; stroke-width: 1.500px; }
.block-grey { fill: url(#gBlock); stroke: #333; stroke-width: 1.500px; filter: drop-shadow(1px 1px 1px #999); }
.screen { fill: #fff; stroke: #222; stroke-width: 1.500px; }
.wire { fill: none; stroke: #000; stroke-width: 1.200px; }
.arrow, .dot { fill: #000; }
.inner { fill: none; stroke: #bbb; }
.inner-fill { fill: #fff; stroke: #bbb; }
.shadow-line { fill: #555; }
.display-yl { fill: url(#gDisp); stroke: #b8ab58; filter: drop-shadow(0 1px 1px #aaa); }
.yl-text { font: 11.500px "DejaVu Sans", sans-serif; fill: #6a6220; text-anchor: middle; letter-spacing: .5px; }
.handle { fill: #fff; fill-opacity: .6; stroke: #aaa; stroke-width: 1.200px; }
.disp-box { fill: #fff; stroke: #111; }
.disp-val { font: 15.500px "Liberation Sans", Arial, sans-serif; fill: #111; text-anchor: end; }
.selected { fill: #63b8f5; }

.vscroll { position: absolute; right: 5px; top: 0; bottom: 0; width: 19px; background: #f6f6f6; }
.vs-thumb { position: absolute; left: 0; right: 0; top: 233px; height: 483px; background: #cdcdcd; }
.vs-arrow { position: absolute; width: 8px; height: 8px; border-left: 1.500px solid #333; border-top: 1.500px solid #333; left: 5px; }
.vs-up { top: 10px; transform: rotate(45deg); }
.vs-down { bottom: 10px; transform: rotate(225deg); }
.hscroll { height: 19px; flex: none; position: relative; background: #f0f0f0; border-bottom: 1px solid #8f8f8f; margin-right: 2px; }
.hs-thumb { position: absolute; left: 97px; right: 47px; top: 0; bottom: 0; background: #cdcdcd; }
.hs-arrow { position: absolute; top: 6px; width: 7px; height: 7px; border-left: 1.500px solid #333; border-top: 1.500px solid #333; }
.hs-left { left: 7px; transform: rotate(-45deg); }
.hs-right { right: 28px; transform: rotate(135deg); }

/* status bar */
.statusbar { height: 30px; flex: none; display: flex; align-items: center; padding: 5px 0 0 6px; font-size: 14px; background: #f0f0f0; color: #333; white-space: nowrap; }
.st-warn { margin-left: 916px; color: #1a1ab0; width: 100px; }
.st-zoom { margin-left: 360px; }
.st-solver { margin-left: auto; margin-right: 6px; color: #1a1ab0; }

/* taskbar */
.taskbar { height: 50px; flex: none; display: flex; align-items: center; background: #f0f0f0; color: #222; }
.start { width: 61px; padding-left: 20px; }
.search { width: 429px; height: 49px; background: #fff; border: 1px solid #cfcfcf; display: flex; align-items: center; padding-left: 14px; }
.search-text { margin-left: 12px; font-size: 18px; color: #333; }
.tb-sys { display: flex; align-items: center; justify-content: center; }
.tb-ring { width: 60px; }
.tb-view { width: 58px; }
.tb-sep { width: 4px; height: 46px; margin: 0 8px; border-left: 1px solid #555; border-right: 1px solid #555; }
.tb-apps { display: flex; gap: 11px; margin-left: 9px; height: 50px; }
.app-cell { width: 51px; display: flex; align-items: center; justify-content: center; border-bottom: 3px solid transparent; padding-top: 2px; }
.app-on { border-bottom-color: #0a78d0; }
.app-matlab { width: 61px; margin-left: -5px; background: #f8f8f8; }
.tray-help { margin-left: 215px; width: 40px; display: flex; justify-content: center; }
.weather { display: flex; align-items: center; margin-left: 54px; font-size: 17.500px; color: #222; white-space: nowrap; width: 195px; }
.temp { margin-left: 13px; }
.sky { margin-left: 10px; font-size: 16.500px; }
.tray { display: flex; align-items: center; gap: 7px; width: 196px; padding-left: 10px; }
.tray-chev { margin-right: 3px; }
.tray-pen { margin-left: 7px; }
.clock { width: 80px; display: flex; flex-direction: column; align-items: center; font-size: 15px; line-height: 24px; color: #222; white-space: nowrap; }
.notify { margin-left: 23px; }

/* floating scope window */
.scope { position: absolute; left: 394px; top: 287px; width: 700px; height: 629px; background: #fff; display: flex; flex-direction: column; box-shadow: 0 4px 18px rgba(0,0,0,.38); }
.scope-title { height: 38px; flex: none; display: flex; align-items: center; padding-left: 9px; }
.scope-name { margin-left: 3px; font-size: 14.100px; color: #222; }
.scope-ctl { margin-left: auto; display: flex; padding-right: 2px; }
.scope-menu { height: 30px; flex: none; display: flex; align-items: center; padding: 1px 0 0 8px; font-size: 14.400px; color: #111; gap: 17px; position: relative; border-bottom: 1px solid #b8b8b8; }
.menu-dock { position: absolute; right: 4px; top: 9px; }
.scope-tools { height: 33px; flex: none; background: #f0f0f0; border-bottom: 1px solid #cfcfcf; overflow: hidden; }
.sc-sep { stroke: #b5b5b5; }
.scope-plot { flex: 1; min-height: 0; background: #fff; }
.grid { stroke: #8e8e8e; fill: none; stroke-width: 1px; }
.tick { stroke: #000; fill: none; stroke-width: 1px; }
.axes { fill: none; stroke: #000; stroke-width: 1.500px; }
.curve { fill: none; stroke: #000; stroke-width: 3.200px; stroke-linejoin: round; }
.ytick, .xtick { font: 12.500px "Liberation Sans", Arial, sans-serif; fill: #111; }
.ytick { text-anchor: end; }
.xtick { text-anchor: middle; }
.restore-box { fill: #eee; stroke: #000; stroke-width: 1.200px; }
.scope-status { height: 31px; flex: none; display: flex; align-items: center; background: #efefef; border-top: 2px solid #bbb; font: 12.500px "Liberation Sans", Arial, sans-serif; color: #111; padding-left: 1px; }
.ss-ready { margin-right: auto; }
.ss-cell { height: 22px; line-height: 20px; padding-left: 3px; border: 1px solid #fff; border-top-color: #aaa; border-left-color: #aaa; white-space: nowrap; }
.ss-sample { width: 95px; }
.ss-offset { width: 77px; margin-left: 3px; }
.ss-time { width: 81px; margin-left: 2px; margin-right: 3px; }
.q-help { font: bold 16px "Liberation Sans", sans-serif; fill: #222; text-anchor: middle; }
.help-q { font: bold 16px "Liberation Sans", sans-serif; fill: #fff; text-anchor: middle; }
```
